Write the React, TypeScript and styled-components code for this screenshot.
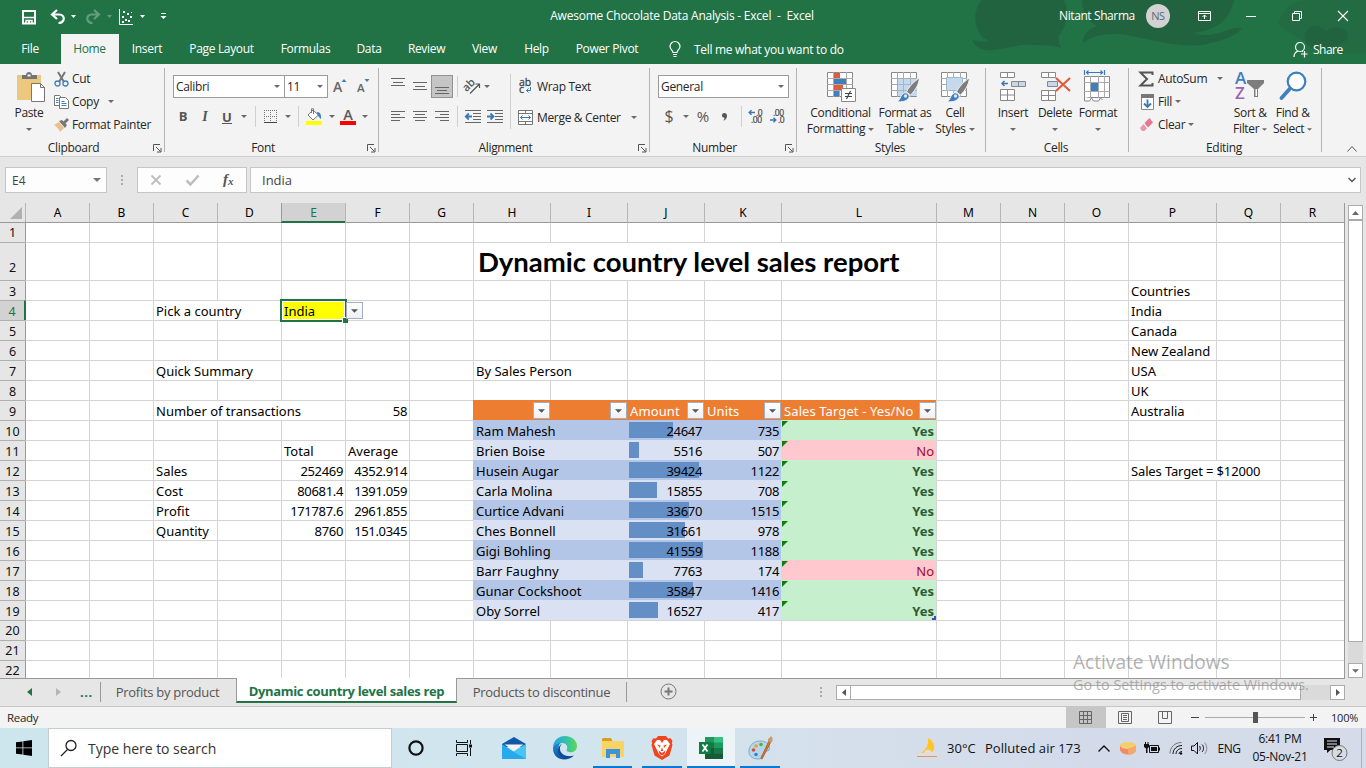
import React from "react";
import styled, { createGlobalStyle, css } from "styled-components";

const green = "#217346";
const uiFont = `"Open Sans", "Noto Sans", sans-serif`;
const cellFont = `"Noto Sans", "Open Sans", sans-serif`;

const GlobalStyle = createGlobalStyle`
  *, *::before, *::after { box-sizing: border-box; }
  body { margin: 0; background: #e6e6e6; overflow: hidden; }
  svg { display: block; flex: none; overflow: visible; }
`;

const Window = styled.div`
  position: relative;
  width: 1366px;
  height: 768px;
  display: flex;
  flex-direction: column;
  overflow: hidden;
  font-family: ${uiFont};
  font-size: 12px;
  letter-spacing: -0.33px;
  color: #262626;
  white-space: nowrap;
`;

/* ---------- Title bar and tabs ---------- */

const Banner = styled.header`
  position: relative;
  height: 64px;
  background: ${green};
  color: #fff;
  display: flex;
  flex-direction: column;
`;

const BannerArt = styled.svg`
  position: absolute;
  right: 0;
  top: 0;
`;

const TitleBar = styled.div`
  position: relative;
  height: 34px;
  display: grid;
  grid-template-columns: 500px 364px 1fr;
  align-items: center;
`;

const QuickAccess = styled.div`
  display: flex;
  align-items: center;
  padding-left: 21px;
`;

const WindowTitle = styled.div`
  text-align: center;
  letter-spacing: -0.22px;
  white-space: pre;
  padding-bottom: 3px;
`;

const Account = styled.div`
  display: flex;
  align-items: center;
  padding: 0 0 3px 195px;
`;

const UserName = styled.span`
  width: 87px;
  letter-spacing: -0.4px;
`;

const Avatar = styled.span`
  width: 24px;
  height: 24px;
  border-radius: 50%;
  background: #d2d2d2;
  color: #5c6a76;
  font-size: 11px;
  line-height: 24px;
  text-align: center;
  margin-right: 28px;
`;

const TabRow = styled.nav`
  position: relative;
  display: flex;
  height: 30px;
  line-height: 29px;
`;

const Tab = styled.a<{ $w: number; $active?: boolean }>`
  width: ${(p) => p.$w}px;
  padding-right: 1px;
  text-align: center;
  ${(p) => p.$active && css`background: #f3f3f3; color: ${green};`}
`;

const TellMe = styled.div`
  display: flex;
  align-items: center;
  gap: 13px;
  margin-left: 17px;
  width: 624px;
  letter-spacing: -0.3px;
`;

const Share = styled.div`
  display: flex;
  align-items: center;
  gap: 4px;
  letter-spacing: -0.5px;
`;

/* ---------- Ribbon ---------- */

const Ribbon = styled.section`
  display: flex;
  height: 93px;
  background: #f3f3f3;
  border-bottom: 1px solid #cfcfcf;
  padding-top: 4px;
`;

const Group = styled.div<{ $w: number }>`
  width: ${(p) => p.$w}px;
  height: 84px;
  border-right: 1px solid #b4b4b4;
  display: flex;
  flex-direction: column;
`;

const GroupBody = styled.div<{ $pad?: number }>`
  height: 71px;
  flex: none;
  display: flex;
  padding-left: ${(p) => p.$pad ?? 0}px;
`;

const GroupFooter = styled.div`
  position: relative;
  height: 13px;
  line-height: 18px;
  text-align: center;
  padding-right: 17px;
`;

const PlainFooter = styled(GroupFooter)`
  padding-right: 2px;
`;

const Launcher = styled.svg`
  position: absolute;
  right: 2px;
  top: 5px;
`;

const Stack = styled.div`
  display: flex;
  flex-direction: column;
`;

const CommandStack = styled(Stack)`
  margin-top: -1px;
`;

const CommandRow = styled.div<{ $gap?: number }>`
  height: 23px;
  display: flex;
  align-items: center;
  line-height: 20px;
  gap: ${(p) => p.$gap ?? 3}px;
`;

const ToolRow = styled.div<{ $top: number; $h?: number }>`
  display: flex;
  align-items: center;
  height: ${(p) => p.$h ?? 23}px;
  margin-top: ${(p) => p.$top}px;
`;

const Slot = styled.div<{ $w: number; $on?: boolean }>`
  width: ${(p) => p.$w}px;
  height: 23px;
  display: flex;
  align-items: center;
  justify-content: center;
  flex: none;
  ${(p) => p.$on && css`background: #c5c5c5; border: 1px solid #929292;`}
`;

const Divider = styled.span<{ $h?: number }>`
  width: 1px;
  height: ${(p) => p.$h ?? 21}px;
  background: #d0d0d0;
  flex: none;
`;

const Field = styled.div<{ $w: number }>`
  width: ${(p) => p.$w}px;
  height: 23px;
  border: 1px solid #9b9b9b;
  background: #fff;
  display: flex;
  align-items: center;
  justify-content: space-between;
  padding: 0 4px 0 2px;
  & + & { margin-left: -1px; }
`;

const Glyph = styled.span<{ $size?: number; $bold?: boolean; $italic?: boolean; $under?: boolean }>`
  font-size: ${(p) => p.$size ?? 13}px;
  line-height: 15px;
  font-weight: ${(p) => (p.$bold ? 700 : 400)};
  font-style: ${(p) => (p.$italic ? "italic" : "normal")};
  color: #555;
  letter-spacing: 0;
  ${(p) => p.$under && css`border-bottom: 1px solid #555; height: 14px; line-height: 14px;`}
`;

const SerifGlyph = styled(Glyph)`
  font-family: "Liberation Serif", serif;
  font-weight: 700;
`;

const BigButton = styled.div<{ $w: number }>`
  width: ${(p) => p.$w}px;
  display: flex;
  flex-direction: column;
  align-items: center;
  padding-top: 3px;
  flex: none;
`;

const PasteButton = styled(BigButton)`
  padding-left: 4px;
`;

const BigIcon = styled.div`
  height: 34px;
`;

const BigLabel = styled.div`
  height: 16px;
  line-height: 16px;
  display: flex;
  align-items: center;
  gap: 3px;
`;

const Collapse = styled.div`
  flex: 1;
  display: flex;
  align-items: flex-end;
  justify-content: flex-end;
  padding: 0 9px 4px 0;
`;

/* ---------- Formula bar ---------- */

const FormulaBar = styled.section`
  display: flex;
  height: 46px;
  padding: 10px 5px 0 5px;
  background: #e6e6e6;
  font-size: 13px;
  letter-spacing: 0;
  color: #444;
`;

const FormulaBox = styled.div<{ $w: number }>`
  width: ${(p) => p.$w}px;
  height: 26px;
  border: 1px solid #c6c6c6;
  background: #fdfdfd;
  display: flex;
  align-items: center;
`;

const NameBox = styled(FormulaBox)`
  justify-content: space-between;
  padding: 0 5px 0 6px;
  font-size: 12px;
`;

const FormulaInput = styled(FormulaBox)`
  margin-left: 3px;
  justify-content: space-between;
  padding: 0 4px 0 11px;
`;

const Dots = styled.div<{ $w: number }>`
  width: ${(p) => p.$w}px;
  display: flex;
  flex-direction: column;
  align-items: center;
  gap: 2px;
  height: 26px;
  justify-content: center;
`;

const Dot = styled.i`
  width: 2px;
  height: 2px;
  background: #ababab;
`;

/* ---------- Sheet ---------- */

const SheetArea = styled.main`
  display: flex;
  height: 475px;
  background: #e6e6e6;
`;

const Sheet = styled.div`
  width: 1345px;
  border-right: 1px solid #999;
  overflow: hidden;
  font-family: ${cellFont};
  font-size: 13px;
  letter-spacing: 0;
  color: #000;
`;

const gridColumns = "25px repeat(7, 64px) repeat(4, 77px) 155px repeat(3, 64px) 88px repeat(2, 64px)";

const ColumnHeads = styled.div`
  display: grid;
  grid-template-columns: ${gridColumns};
  height: 19px;
  background: #e6e6e6;
`;

const ColumnHead = styled.div<{ $active?: boolean }>`
  font-size: 12px;
  line-height: 19px;
  text-align: center;
  border-left: 1px solid #b5b5b5;
  ${(p) =>
    p.$active &&
    css`
      position: relative;
      z-index: 1;
      background: #d2d2d2;
      color: ${green};
      border-left-color: #999;
      box-shadow: inset 0 -1px 0 ${green}, 0 1px 0 ${green};
    `}
`;

const Corner = styled.div`
  display: flex;
  align-items: flex-end;
  justify-content: flex-end;
  padding: 0 3px 3px 0;
`;

const SheetRow = styled.div<{ $h: number; $first?: boolean }>`
  display: grid;
  grid-template-columns: ${gridColumns};
  height: ${(p) => p.$h}px;
  background: #fff;
  ${(p) => p.$first && css`& > * { border-top-color: #999 !important; }`}
`;

const RowHead = styled.div<{ $active?: boolean; $tall?: boolean }>`
  display: flex;
  align-items: flex-end;
  justify-content: center;
  background: ${(p) => (p.$active ? "#d2d2d2" : "#e6e6e6")};
  color: ${(p) => (p.$active ? green : "#111")};
  border-top: 1px solid #b0b0b0;
  font-size: 12.5px;
  line-height: 18px;
  padding-bottom: ${(p) => (p.$tall ? 3 : 0)}px;
  ${(p) => p.$active && css`border-right: 1px solid ${green};`}
`;

type Tone = "header" | "dark" | "light" | "yes" | "no" | "plain";

const tones: Record<Tone, string> = {
  plain: "transparent",
  header: "#ed7d31",
  dark: "#b4c6e7",
  light: "#d9e1f2",
  yes: "#c6efce",
  no: "#ffc7ce",
};

const Cell = styled.div<{ $span: number; $tone: Tone; $right?: boolean; $edge?: string }>`
  position: relative;
  grid-column: span ${(p) => p.$span};
  min-width: 0;
  border-top: 1px solid #d4d4d4;
  border-left: 1px solid ${(p) => p.$edge ?? "#d4d4d4"};
  padding: 0 2px;
  line-height: 20px;
  text-align: ${(p) => (p.$right ? "right" : "left")};
  letter-spacing: ${(p) => (p.$right ? "-0.34px" : "0")};
  background: ${(p) => tones[p.$tone]};
  ${(p) => p.$tone !== "plain" && css`border-color: transparent;`}
  ${(p) => p.$tone === "header" && css`
    display: flex;
    justify-content: space-between;
    color: #fff;
    padding-right: 0;
    letter-spacing: 0.1px;
  `}
  ${(p) => p.$tone === "yes" && css`color: #2f5b33; font-weight: 700; letter-spacing: 0; box-shadow: 1px 0 0 #c6efce;`}
  ${(p) => p.$tone === "no" && css`color: #9c0a2c; letter-spacing: 0; box-shadow: 1px 0 0 #ffc7ce;`}
`;

const TargetNote = styled.span`
  letter-spacing: -0.14px;
`;

const TitleText = styled.div`
  font: 700 27.5px/36px Lato, "Open Sans", sans-serif;
  padding-left: 2px;
  margin-top: 1px;
`;

const DropButton = styled.span`
  width: 17px;
  height: 17px;
  margin-top: 1px;
  border: 1px solid #a3afc0;
  background: linear-gradient(#fff, #eef0f4);
  display: flex;
  align-items: center;
  justify-content: center;
  flex: none;
`;

const CellDrop = styled(DropButton)`
  position: absolute;
  left: 64px;
  top: 1px;
  margin: 0;
  z-index: 2;
`;

const Selection = styled.div`
  position: absolute;
  left: -2px;
  top: -2px;
  width: 67px;
  height: 23px;
  border: 2px solid ${green};
  background: #ff0;
  box-shadow: inset 0 0 0 1px #fff;
  padding-left: 2px;
  line-height: 20px;
  z-index: 1;
  &::after {
    content: "";
    position: absolute;
    right: -3px;
    bottom: -3px;
    width: 6px;
    height: 6px;
    background: ${green};
    border: 1px solid #fff;
    border-right: 0;
    border-bottom: 0;
  }
`;

const DataBar = styled.i`
  position: absolute;
  left: 1px;
  top: 1px;
  height: 16px;
  background: #638ec6;
`;

const BarValue = styled.span`
  position: relative;
`;

const ErrorMark = styled.i`
  position: absolute;
  left: 0;
  top: 0;
  border-top: 6px solid #0a800a;
  border-right: 6px solid transparent;
`;

const TableCorner = styled.i`
  position: absolute;
  right: 0;
  bottom: 1px;
  width: 4px;
  height: 4px;
  border-right: 2px solid #3f51b5;
  border-bottom: 2px solid #3f51b5;
`;

const VScroll = styled.div`
  width: 15px;
  margin: 2px 0 0 3px;
  display: flex;
  flex-direction: column;
  height: 473px;
  background: #dadada;
`;

const ScrollButton = styled.div`
  width: 15px;
  height: 15px;
  border: 1px solid #ababab;
  background: #fff;
  display: flex;
  align-items: center;
  justify-content: center;
  flex: none;
`;

const VThumb = styled.div`
  height: 422px;
  margin-bottom: auto;
  border: 1px solid #ababab;
  background: #fff;
`;

/* ---------- Sheet tabs and status bar ---------- */

const SheetTabs = styled.footer`
  display: flex;
  height: 28px;
  background: #e6e6e6;
  font-size: 13px;
  letter-spacing: -0.3px;
  color: #555;
  line-height: 26px;
`;

const TabsLine = styled.div<{ $w: number }>`
  width: ${(p) => p.$w}px;
  border-top: 1px solid #999;
  padding-bottom: 2px;
  display: flex;
  align-items: center;
`;

const TabNav = styled.div`
  display: flex;
  align-items: center;
  width: 100px;
  padding-left: 27px;
`;

const Ellipsis = styled.b`
  color: ${green};
  letter-spacing: 0.6px;
  margin-left: 19px;
`;

const SheetTab = styled.div<{ $w: number }>`
  width: ${(p) => p.$w}px;
  text-align: center;
  letter-spacing: -0.27px;
  line-height: 24px;
`;

const ActiveSheetTab = styled(SheetTab)`
  background: #fff;
  color: ${green};
  font-weight: 700;
  letter-spacing: -0.34px;
  height: 25px;
  border-left: 1px solid #999;
  border-right: 1px solid #999;
  border-bottom: 2px solid ${green};
  line-height: 26px;
`;

const TabSeparator = styled.i`
  width: 1px;
  height: 20px;
  background: #999;
`;

const HScroll = styled.div`
  display: flex;
  width: 509px;
  height: 15px;
  background: #dadada;
  justify-content: flex-start;
  margin-top: 2px;
`;

const HThumb = styled.div`
  width: 451px;
  margin: 0 auto 0 -1px;
  border: 1px solid #ababab;
  background: #fff;
`;

const StatusBar = styled.div`
  display: flex;
  height: 22px;
  background: #f3f3f3;
  border-top: 1px solid #c6c6c6;
  align-items: center;
  font-size: 11.5px;
`;

const ReadyText = styled.div`
  width: 1066px;
  padding-left: 7px;
`;

const ViewButton = styled.div<{ $on?: boolean }>`
  width: 40px;
  height: 21px;
  display: flex;
  align-items: center;
  justify-content: center;
  padding: 0 2px 1px 0;
  background: ${(p) => (p.$on ? "#c6c6c6" : "transparent")};
`;

const ZoomControl = styled.div`
  display: flex;
  align-items: center;
  margin-left: 5px;
  width: 140px;
`;

const Percent = styled.span`
  font-size: 11px;
  letter-spacing: -0.2px;
`;

/* ---------- Taskbar ---------- */

const Taskbar = styled.footer`
  display: flex;
  height: 40px;
  background: linear-gradient(90deg, #cde6ee 0%, #d2e5ee 45%, #d5dfeb 62%, #d3dbea 80%, #d5dbe9 100%);
  color: #111;
  font-size: 13px;
  letter-spacing: 0;
  & > * { flex: none; }
`;

const StartButton = styled.div`
  width: 48px;
  display: flex;
  align-items: center;
  justify-content: center;
`;

const SearchBox = styled.div`
  width: 344px;
  background: #fff;
  border: 1px solid #c4ccd0;
  display: flex;
  align-items: center;
  padding-left: 11px;
  gap: 10px;
  font-size: 14px;
  letter-spacing: -0.03px;
  color: #333;
`;

const TaskItem = styled.div<{ $w?: number; $open?: boolean; $active?: boolean }>`
  width: ${(p) => p.$w ?? 49}px;
  display: flex;
  align-items: center;
  justify-content: center;
  position: relative;
  ${(p) =>
    p.$open &&
    css`
      &::after {
        content: "";
        position: absolute;
        bottom: 0;
        left: ${p.$active ? 0 : 5}px;
        right: ${p.$active ? 0 : 5}px;
        height: 2px;
        background: #0a78d4;
      }
    `}
  ${(p) => p.$active && css`background: #ecf4f8;`}
`;

const Tray = styled.div`
  display: flex;
  align-items: center;
  margin-left: 131px;
  width: 450px;
`;

const Weather = styled.div`
  display: flex;
  align-items: center;
  gap: 9px;
  width: 178px;
  letter-spacing: 0.06px;
`;

const Clock = styled.div`
  width: 60px;
  text-align: center;
  font-size: 12px;
  line-height: 18px;
  letter-spacing: -0.25px;
`;

const TrayText = styled.span`
  font-size: 12px;
  letter-spacing: -0.4px;
  width: 42px;
  text-align: center;
`;

const TrayIcon = styled.div<{ $w: number }>`
  width: ${(p) => p.$w}px;
  display: flex;
  justify-content: center;
`;

const PeekEdge = styled.i`
  width: 1px;
  height: 40px;
  background: #a9b3bd;
`;

const Watermark = styled.div`
  position: absolute;
  left: 1073px;
  top: 650px;
  font-size: 19.1px;
  line-height: 24px;
  letter-spacing: 0;
  color: rgba(140, 140, 140, 0.68);
`;

const WatermarkHint = styled.div`
  font-size: 14.4px;
  line-height: 22px;
  letter-spacing: 0;
`;

/* ---------- Icons ---------- */

const Caret = ({ color = "#6a6a6a", w = 6 }: { color?: string; w?: number }) => (
  <svg width={w} height={Math.ceil(w / 2)} viewBox="0 0 6 3"><path d="M0 0h6L3 3z" fill={color} /></svg>
);

const LauncherIcon = () => (
  <Launcher width="9" height="9" viewBox="0 0 9 9" fill="none" stroke="#555">
    <path d="M.5 7V.5H7M3 3l4.5 4.5M8 4v4H4" />
  </Launcher>
);

const Lines = ({ kind }: { kind: "top" | "mid" | "bottom" | "left" | "center" | "right" }) => {
  const paths = {
    top: "M0 -.5h14M2 3.5h10M0 6.5h14",
    mid: "M0 3.5h14M2 7.5h10M0 10.5h14",
    bottom: "M0 8.5h14M2 11.5h10M0 14.5h14",
    left: "M0 2.5h14M0 5.5h9M0 8.5h14M0 11.5h9",
    center: "M0 2.5h14M2 5.5h10M0 8.5h14M2 11.5h10",
    right: "M0 2.5h14M5 5.5h9M0 8.5h14M5 11.5h9",
  };
  return <svg width="14" height="16" viewBox="0 0 14 16"><path d={paths[kind]} stroke="#666" /></svg>;
};

const Indent = ({ right }: { right?: boolean }) => (
  <svg width="16" height="14" viewBox="0 0 16 14">
    <path d="M0 .5h16M8 3.5h8M8 6.5h8M8 9.5h8M0 12.5h16" stroke="#666" />
    {right ? <path d="M0 6.5h6M3.5 3.5l3 3-3 3" stroke="#3a78b5" strokeWidth="1.8" fill="none" /> : <path d="M1 6.5h6M3.8 3.5l-3 3 3 3" stroke="#3a78b5" strokeWidth="1.8" fill="none" />}
  </svg>
);

const GridIcon = ({ children }: { children?: React.ReactNode }) => (
  <svg width="30" height="32" viewBox="0 0 30 32">
    <path d="M1.5 1.5h25v24h-25z" fill="#fff" stroke="#888" />
    <path d="M1 7.500h26M1 13.500h26M1 19.500h26M7.5 1v25M13.5 1v25M20.5 1v25" stroke="#aaa" />
    {children}
  </svg>
);

const Brush = () => (
  <g>
    <path d="M29.5 7c-5 3-11 9-13 14l4 3c4-4 8-9 9-17z" fill="#7d7d7d" stroke="#f3f3f3" />
    <path d="M7 30.500c3-1 3-5 6-8 3-2 7 1 6 4-2 4-8 5-12 4z" fill="#3f7fbd" stroke="#f3f3f3" />
    <circle cx="15.500" cy="25" r="1.700" fill="#dbe8f4" />
  </g>
);

const BorderIcon = () => (
  <svg width="13" height="14" viewBox="0 0 13 14">
    <path d="M.5 0v12M12.5 0v12M6.5 0v12M0 .5h13M0 6.5h13" stroke="#777" strokeDasharray="1 1" />
    <path d="M0 12.5h13" stroke="#444" />
  </svg>
);

const FillIcon = () => (
  <svg width="16" height="17" viewBox="0 0 16 17">
    <path d="M2 7l5-5 5.5 5-5.5 5z" fill="#fff" stroke="#777" />
    <path d="M5.5 5V.8h2V6" fill="none" stroke="#777" />
    <path d="M11 4c3 0 4.5 2.5 4 7-1.500-.6-2.200-3-3.500-4z" fill="#3f7fbd" />
    <path d="M0 13h16v4H0z" fill="#ff0" />
  </svg>
);

const Letter = styled.text`
  font-family: "Open Sans", sans-serif;
  letter-spacing: 0;
`;

const FontColorIcon = () => (
  <svg width="16" height="17" viewBox="0 0 16 17">
    <Letter x="8" y="11.500" fontSize="14.500" fontWeight="600" textAnchor="middle" fill="#5a5a5a">A</Letter>
    <path d="M0 13h16v4H0z" fill="#f00" />
  </svg>
);

const FontSizeIcon = ({ up }: { up?: boolean }) => (
  <svg width="14" height="17" viewBox="0 0 14 17">
    <Letter x={up ? 0 : 1} y="14" fontSize={up ? 14 : 11.5} fontWeight="600" fill="#666">A</Letter>
    <path d={up ? "M8.500 4h5L11 1z" : "M8.500 1h5L11 4z"} fill="#3f7fbd" />
  </svg>
);

const DecimalIcon = ({ more }: { more?: boolean }) => (
  <svg width="15" height="15" viewBox="0 0 15 15">
    <Letter x={more ? 8 : 3} y="6.500" fontSize="8.500" fill="#444" stroke="#444" strokeWidth=".2" textLength={more ? 6.5 : 11}>{more ? ".0" : ".00"}</Letter>
    <Letter x={more ? 3 : 8} y="14" fontSize="8.500" fill="#444" stroke="#444" strokeWidth=".2" textLength={more ? 11 : 6.5}>{more ? ".00" : ".0"}</Letter>
    {more ? <path d="M7 3.500H1.500M3.500 1.200L1.200 3.500l2.300 2.300" stroke="#3a78b5" strokeWidth="1.400" fill="none" /> : <path d="M0 11h5.500M3.500 8.700L5.800 11l-2.300 2.300" stroke="#3a78b5" strokeWidth="1.400" fill="none" />}
  </svg>
);

/* ---------- Sheet data ---------- */

const columns = "ABCDEFGHIJKLMNOPQR".split("");

interface CellDef {
  text: React.ReactNode;
  span?: number;
  right?: boolean;
  tone?: Tone;
}

const sales: [string, number, number][] = [
  ["Ram Mahesh", 24647, 735],
  ["Brien Boise", 5516, 507],
  ["Husein Augar", 39424, 1122],
  ["Carla Molina", 15855, 708],
  ["Curtice Advani", 33670, 1515],
  ["Ches Bonnell", 31661, 978],
  ["Gigi Bohling", 41559, 1188],
  ["Barr Faughny", 7763, 174],
  ["Gunar Cockshoot", 35847, 1416],
  ["Oby Sorrel", 16527, 417],
];

const maxAmount = 41559;
const cells: Record<string, CellDef> = {};
const put = (ref: string, text: React.ReactNode, extra: Partial<CellDef> = {}) => {
  cells[ref] = { text, ...extra };
};

put("H2", <TitleText>Dynamic country level sales report</TitleText>, { span: 5 });
put("C4", "Pick a country", { span: 2 });
put("E4", (
  <>
    <Selection>India</Selection>
    <CellDrop><Caret w={7} color="#555" /></CellDrop>
  </>
));
put("C7", "Quick Summary", { span: 2 });
put("H7", "By Sales Person", { span: 2 });
put("C9", "Number of transactions", { span: 3 });
put("F9", "58", { right: true });
put("E11", "Total");
put("F11", "Average");
[
  ["Sales", "252469", "4352.914"],
  ["Cost", "80681.4", "1391.059"],
  ["Profit", "171787.6", "2961.855"],
  ["Quantity", "8760", "151.0345"],
].forEach(([name, total, average], i) => {
  put(`C${12 + i}`, name);
  put(`E${12 + i}`, total, { right: true });
  put(`F${12 + i}`, average, { right: true });
});
["Countries", "India", "Canada", "New Zealand", "USA", "UK", "Australia"].forEach((name, i) => put(`P${3 + i}`, name));
put("P12", <TargetNote>Sales Target = $12000</TargetNote>, { span: 2 });
[["H", ""], ["I", ""], ["J", "Amount"], ["K", "Units"], ["L", "Sales Target - Yes/No"]].forEach(([col, label]) =>
  put(`${col}9`, <><span>{label}</span><DropButton><Caret w={7} color="#555" /></DropButton></>, { tone: "header" })
);
sales.forEach(([name, amount, units], i) => {
  const row = 10 + i;
  const tone: Tone = i % 2 ? "light" : "dark";
  const hit = amount > 12000;
  put(`H${row}`, name, { span: 2, tone });
  put(`J${row}`, (
    <>
      <DataBar style={{ width: Math.round((amount / maxAmount) * 74) }} />
      <BarValue>{amount}</BarValue>
    </>
  ), { tone, right: true });
  put(`K${row}`, units, { tone, right: true });
  put(`L${row}`, (
    <>
      <ErrorMark />
      {hit ? "Yes" : "No"}
      {i === sales.length - 1 && <TableCorner />}
    </>
  ), { tone: hit ? "yes" : "no", right: true });
});

const GridRow = ({ row }: { row: number }) => {
  const items: React.ReactNode[] = [];
  for (let c = 0; c < columns.length; ) {
    const def = cells[columns[c] + row];
    const span = def?.span ?? 1;
    items.push(
      <Cell key={c} $span={span} $tone={def?.tone ?? "plain"} $right={def?.right} $edge={c === 0 ? (row === 4 ? green : "#999") : undefined}>
        {def?.text}
      </Cell>
    );
    c += span;
  }
  return (
    <SheetRow $h={row === 2 ? 38 : 20} $first={row === 1}>
      <RowHead $active={row === 4} $tall={row === 2}>{row}</RowHead>
      {items}
    </SheetRow>
  );
};

/* ---------- Page sections ---------- */

const TopBanner = () => (
  <Banner>
    <BannerArt width="406" height="64" viewBox="0 0 406 64">
      <path d="M22 0C14 8 13 24 20 34c3 4 6 6 9 7-7 1-12 1-17-2 2 8 10 12 22 11 12-1 24-6 40-5 10 0 18 0 27 3-2-4-3-8-2-13C109 24 108 8 104 0z" fill="#22633f" />
      <path d="M122 0c0 14 6 21 15 26-8 3-14 8-14 17 12-9 28-11 48-7 28 5 56 14 80 7 18-4 28-10 31-15-10-1-16 4-28 6-8 2-14 1-20-1 24-3 36-14 40-33z" fill="#22633f" />
      <path d="M318 24c4-16 14-24 30-24h58v53c-30 3-62-6-88-29z" fill="#236c43" />
      <path d="M345 40c-3-12 12-20 21-9 6-6 22-4 22 5 0 8-22 14-28 15-7-1-14-5-15-11z" fill="#22633f" />
    </BannerArt>
    <TitleBar>
      <QuickAccess>
        <svg width="130" height="20" viewBox="0 0 130 20" fill="none" stroke="#fff">
          <path d="M2 4h12v12.500H2z" strokeWidth="2" /><path d="M3 10.500h10" strokeWidth="1.500" /><path d="M5 17v-3.500h6V17" strokeWidth="1.500" /><path d="M7 14h2v3H7z" fill="#fff" stroke="none" />
          <path d="M36 3l-5 4.500 5 4.500M31.500 7.500H38c4 0 5.500 3 4.500 5.500-.8 2-2.500 3-5 3" strokeWidth="2.200" />
          <path d="M50 8h5L52.500 11z" fill="#fff" stroke="none" />
          <g opacity=".3"><path d="M73 3l5 4.500-5 4.500M77.500 7.500H71c-4 0-5.500 3-4.500 5.500.8 2 2.500 3 5 3" strokeWidth="2.200" /><path d="M86 8h5L88.500 11z" fill="#fff" stroke="none" /></g>
          <path d="M98.500 2v15.500H112" />
          <path d="M102 4h2v2h-2zM106 6h2v2h-2zM101 9h2v2h-2zM109 9h2v2h-2zM104 12h2v2h-2zM101 14h2v2h-2zM107 13h2v2h-2zM110 5h1v1h-1z" fill="#fff" stroke="none" />
          <path d="M119 8h5l-2.500 3z" fill="#fff" stroke="none" />
        </svg>
        <svg width="18" height="20" viewBox="0 0 18 20" fill="#fff"><path d="M10 6h5v1h-5zM9.500 9h6l-3 3z" /></svg>
      </QuickAccess>
      <WindowTitle>Awesome Chocolate Data Analysis - Excel  -  Excel</WindowTitle>
      <Account>
        <UserName>Nitant Sharma</UserName>
        <Avatar>NS</Avatar>
        <svg width="152" height="14" viewBox="0 0 152 14" fill="none" stroke="#fff">
          <path d="M.5 2.500h12v9H.5zM.5 4.500h12M6.500 10V6M4.500 8l2-2 2 2" />
          <path d="M48 7.500h10" />
          <path d="M94.500 4.500h7v7h-7zM96.500 4V2.500h7v7H102" />
          <path d="M140 2l10 10M150 2l-10 10" strokeWidth="1.100" />
        </svg>
      </Account>
    </TitleBar>
    <TabRow>
      <Tab $w={61}>File</Tab>
      <Tab $w={58} $active>Home</Tab>
      <Tab $w={57}>Insert</Tab>
      <Tab $w={92}>Page Layout</Tab>
      <Tab $w={76}>Formulas</Tab>
      <Tab $w={51}>Data</Tab>
      <Tab $w={64}>Review</Tab>
      <Tab $w={52}>View</Tab>
      <Tab $w={52}>Help</Tab>
      <Tab $w={89}>Power Pivot</Tab>
      <TellMe>
        <svg width="12" height="17" viewBox="0 0 12 17" fill="none" stroke="#fff" strokeWidth="1.200">
          <path d="M4 11.500C4 9 1 8.500 1 5.500a5 5 0 0 1 10 0c0 3-3 3.500-3 6zM4 13.500h4M4.500 15.500h3" />
        </svg>
        Tell me what you want to do
      </TellMe>
      <Share>
        <svg width="16" height="17" viewBox="0 0 16 17" fill="none" stroke="#fff" strokeWidth="1.200">
          <circle cx="7" cy="6" r="4.500" /><path d="M1 16c0-3 1.500-5 4-6M9 10l1 .8M8 13h6.500M11.500 10v6.500" />
        </svg>
        Share
      </Share>
    </TabRow>
  </Banner>
);

const RibbonSection = () => (
  <Ribbon>
    <Group $w={165}>
      <GroupBody>
        <PasteButton $w={54}>
          <BigIcon>
            <svg width="32" height="32" viewBox="0 0 32 32">
              <path d="M4 4h24v25H4z" fill="#ecc77e" /><path d="M9 8V4h4c0-4 6-4 6 0h5v4z" fill="#737373" /><path d="M14.500 3.500h3v2h-3z" fill="#fff" />
              <path d="M18.500 12.500h9l4 4v14h-13z" fill="#fff" stroke="#777" /><path d="M27.500 12.500v4h4" fill="none" stroke="#777" />
            </svg>
          </BigIcon>
          <BigLabel>Paste</BigLabel>
          <BigLabel><Caret /></BigLabel>
        </PasteButton>
        <CommandStack>
          <CommandRow>
            <svg width="15" height="16" viewBox="0 0 15 16" fill="none">
              <path d="M4 1l6 10M11 1L5 11" stroke="#777" strokeWidth="2" /><circle cx="3.500" cy="12.500" r="2.500" stroke="#3f7fbd" strokeWidth="1.300" /><circle cx="11.500" cy="12.500" r="2.500" stroke="#3f7fbd" strokeWidth="1.300" />
            </svg>
            Cut
          </CommandRow>
          <CommandRow>
            <svg width="15" height="15" viewBox="0 0 15 15">
              <path d="M.5 1.500h5l2 2v8h-7z" fill="#fff" stroke="#777" /><path d="M5.500 3.500h6l3 3v8h-9z" fill="#fff" stroke="#777" /><path d="M2 4.500h2.500M2 6.500h2.500M2 8.500h2.500M7.500 7.500h3M7.500 9.500h5M7.500 11.500h5" stroke="#3f7fbd" />
            </svg>
            <span>Copy&nbsp;&nbsp;</span>
            <Slot $w={8}><Caret /></Slot>
          </CommandRow>
          <CommandRow>
            <svg width="15" height="15" viewBox="0 0 15 15">
              <path d="M0 8l5-3 5 6-4 4c-1-3-3-5-6-7z" fill="#ecc08a" /><path d="M5 4l3-1 5 5-2 3z" fill="#777" /><path d="M9 5l4-4 2 2-4 4z" fill="#777" />
            </svg>
            Format Painter
          </CommandRow>
        </CommandStack>
      </GroupBody>
      <GroupFooter>Clipboard<LauncherIcon /></GroupFooter>
    </Group>

    <Group $w={214}>
      <GroupBody $pad={8}>
        <Stack>
          <ToolRow $top={7}>
            <Field $w={112}>Calibri<Caret /></Field>
            <Field $w={44}>11<Caret /></Field>
            <Slot $w={24}><FontSizeIcon up /></Slot>
            <Slot $w={21}><FontSizeIcon /></Slot>
          </ToolRow>
          <ToolRow $top={7}>
            <Slot $w={20}><Glyph $bold>B</Glyph></Slot>
            <Slot $w={24}><SerifGlyph $italic $size={14}>I</SerifGlyph></Slot>
            <Slot $w={20}><Glyph $bold $under>U</Glyph></Slot>
            <Slot $w={14}><Caret /></Slot>
            <Slot $w={4} />
            <Divider />
            <Slot $w={28}><BorderIcon /></Slot>
            <Slot $w={7}><Caret /></Slot>
            <Slot $w={7} />
            <Divider />
            <Slot $w={30}><FillIcon /></Slot>
            <Slot $w={5}><Caret /></Slot>
            <Slot $w={28}><FontColorIcon /></Slot>
            <Slot $w={6}><Caret /></Slot>
          </ToolRow>
        </Stack>
      </GroupBody>
      <GroupFooter>Font<LauncherIcon /></GroupFooter>
    </Group>

    <Group $w={271}>
      <GroupBody $pad={8}>
        <Stack>
          <ToolRow $top={7}>
            <Slot $w={22}><Lines kind="top" /></Slot>
            <Slot $w={22}><Lines kind="mid" /></Slot>
            <Slot $w={22} $on><Lines kind="bottom" /></Slot>
            <Slot $w={4} />
            <Divider />
            <Slot $w={26}>
              <svg width="17" height="17" viewBox="0 0 17 17">
                <g transform="rotate(-45 7 8)"><Letter x="0" y="10" fontSize="11" fontWeight="600" fill="#555">ab</Letter></g>
                <path d="M7 15.500l9-9M16.500 10V6h-4" fill="none" stroke="#555" strokeWidth="1.200" />
              </svg>
            </Slot>
            <Caret />
          </ToolRow>
          <ToolRow $top={7}>
            <Slot $w={22}><Lines kind="left" /></Slot>
            <Slot $w={22}><Lines kind="center" /></Slot>
            <Slot $w={22}><Lines kind="right" /></Slot>
            <Slot $w={4} />
            <Divider />
            <Slot $w={30}><Indent /></Slot>
            <Slot $w={14}><Indent right /></Slot>
            <Slot $w={8} />
          </ToolRow>
        </Stack>
        <ToolRow $top={6} $h={55}><Divider $h={55} /></ToolRow>
        <Stack>
          <ToolRow $top={7}>
            <Slot $w={4} />
            <Slot $w={22}>
              <svg width="14" height="17" viewBox="0 0 14 17">
                <Letter x="0" y="7.500" fontSize="10.500" fill="#444" stroke="#444" strokeWidth=".3">ab</Letter>
                <Letter x="0" y="15" fontSize="10.500" fill="#444" stroke="#444" strokeWidth=".3">c</Letter>
                <path d="M11.500 9v3.500H7.500M9.500 10.500l-2 2 2 2" fill="none" stroke="#3a78b5" />
              </svg>
            </Slot>
            Wrap Text
          </ToolRow>
          <ToolRow $top={8}>
            <Slot $w={3} />
            <Slot $w={23}>
              <svg width="15" height="15" viewBox="0 0 15 15" fill="none" stroke="#777">
                <path d="M.5.5h14v14H.5z" fill="#fff" /><path d="M.5 3.500h14M.5 11.500h14M7.500 0v3.500M7.500 11.500V15" /><path d="M2.500 7.500h10M4.500 5.500l-2 2 2 2M10.500 5.500l2 2-2 2" stroke="#3a78b5" />
              </svg>
            </Slot>
            Merge &amp; Center
            <Slot $w={26}><Caret /></Slot>
          </ToolRow>
        </Stack>
      </GroupBody>
      <GroupFooter>Alignment<LauncherIcon /></GroupFooter>
    </Group>

    <Group $w={147}>
      <GroupBody $pad={8}>
        <Stack>
          <ToolRow $top={7}><Field $w={131}>General<Caret /></Field></ToolRow>
          <ToolRow $top={7}>
            <Slot $w={22}><Glyph $size={16}>$</Glyph></Slot>
            <Slot $w={11}><Caret /></Slot>
            <Slot $w={24}><Glyph $size={15}>%</Glyph></Slot>
            <Slot $w={19}>
              <svg width="5" height="8" viewBox="0 0 5 8"><path d="M2.200 0C4 0 5 1.200 5 3c0 2.200-1.500 4-4 5 1-1.200 1.500-2.200 1.500-3.300C1 4.700 0 3.700 0 2.400 0 1 .9 0 2.200 0z" fill="#555" /></svg>
            </Slot>
            <Slot $w={7} />
            <Divider />
            <Slot $w={26}><DecimalIcon more /></Slot>
            <Slot $w={18}><DecimalIcon /></Slot>
          </ToolRow>
        </Stack>
      </GroupBody>
      <GroupFooter>Number<LauncherIcon /></GroupFooter>
    </Group>

    <Group $w={189}>
      <GroupBody $pad={7}>
        <BigButton $w={73}>
          <BigIcon>
            <GridIcon>
              <path d="M8 2h6v5H8zM8 14h9v5H8z" fill="#dd5c3e" /><path d="M8 8h12v5H8zM8 20h5v5H8z" fill="#3f7fbd" />
              <path d="M15.500 17.500h14v13h-14z" fill="#fff" stroke="#888" /><path d="M19 22.500h7M19 25.500h7M24.500 20l-4 8" stroke="#444" strokeWidth="1.200" />
            </GridIcon>
          </BigIcon>
          <BigLabel>Conditional</BigLabel>
          <BigLabel>Formatting<Caret /></BigLabel>
        </BigButton>
        <BigButton $w={56}>
          <BigIcon><GridIcon><path d="M8 8h19v17H8z" fill="#c5d8ec" /><path d="M8 13.500h19M8 19.500h19M13.500 8v17M20.500 8v17" stroke="#9fb8d2" /><Brush /></GridIcon></BigIcon>
          <BigLabel>Format as</BigLabel>
          <BigLabel>Table<Caret /></BigLabel>
        </BigButton>
        <BigButton $w={44}>
          <BigIcon><GridIcon><path d="M6.500 6.500h16v13h-16z" fill="#c5d8ec" stroke="#9fb8d2" /><Brush /></GridIcon></BigIcon>
          <BigLabel>Cell</BigLabel>
          <BigLabel>Styles<Caret /></BigLabel>
        </BigButton>
      </GroupBody>
      <PlainFooter>Styles</PlainFooter>
    </Group>

    <Group $w={143}>
      <GroupBody $pad={6}>
        <BigButton $w={42}>
          <BigIcon>
            <svg width="26" height="32" viewBox="0 0 26 32" fill="#fff" stroke="#888">
              <path d="M.5 1.500h14v5H.5zM7.500 1.500v5M.5 18.500h14v11H.5zM7.500 18.500v11M.5 24h14" /><path d="M11.500 10.500h14v5h-14z" fill="#c5d8ec" /><path d="M18.500 10.500v5" /><path d="M8 12.500H2M4.500 10L2 12.500 4.500 15" fill="none" stroke="#3a78b5" strokeWidth="1.500" />
            </svg>
          </BigIcon>
          <BigLabel>Insert</BigLabel>
          <BigLabel><Caret /></BigLabel>
        </BigButton>
        <BigButton $w={42}>
          <BigIcon>
            <svg width="28" height="32" viewBox="0 0 28 32" fill="#fff" stroke="#888">
              <path d="M.5 1.500h14v5H.5zM7.500 1.500v5M.5 19.500h14v10H.5zM7.500 19.500v10M.5 24.500h14" /><path d="M6.500 10.500h10v5h-10z" fill="#c5d8ec" /><path d="M15 7l14 13M29 7L15 20" fill="none" stroke="#dd5c3e" strokeWidth="2.200" />
            </svg>
          </BigIcon>
          <BigLabel>Delete</BigLabel>
          <BigLabel><Caret /></BigLabel>
        </BigButton>
        <BigButton $w={44}>
          <BigIcon>
            <svg width="29" height="32" viewBox="0 0 29 32" fill="none" stroke="#888">
              <path d="M.5 5.500h25v21H.5z" fill="#fff" /><path d="M0 11.500h26M0 20.500h26M6.500 5v22M14.500 5v22M20.500 5v22" stroke="#aaa" /><path d="M7 12h7v8H7z" fill="#3f7fbd" stroke="none" /><path d="M.5 26v4h5l2-3 2 3h5l2-3 2 2" fill="#fff" /><path d="M.5 -1v5M20.500 -1v5M2 1.500h17M4.500 -.5l-2 2 2 2M16.500 -.5l2 2-2 2" stroke="#3a78b5" strokeWidth="1.200" />
            </svg>
          </BigIcon>
          <BigLabel>Format</BigLabel>
          <BigLabel><Caret /></BigLabel>
        </BigButton>
      </GroupBody>
      <PlainFooter>Cells</PlainFooter>
    </Group>

    <Group $w={193}>
      <GroupBody $pad={10}>
        <CommandStack>
          <CommandRow>
            <svg width="16" height="16" viewBox="0 0 16 16" fill="none" stroke="#555" strokeWidth="2"><path d="M13.500 4V1.500H1.500L8 8l-6.500 6.500h12V12" /></svg>
            AutoSum
            <Slot $w={20}><Caret /></Slot>
          </CommandRow>
          <CommandRow>
            <svg width="16" height="16" viewBox="0 0 16 16"><path d="M2.500.5h12v15h-12z" fill="#fff" stroke="#888" /><path d="M2 0h13v4H2z" fill="#777" /><path d="M8.500 5.500v7M5 9.500l3.500 3.500L12 9.500" fill="none" stroke="#3a78b5" strokeWidth="1.800" /></svg>
            Fill<Caret />
          </CommandRow>
          <CommandRow>
            <svg width="16" height="16" viewBox="0 0 16 16"><path d="M5.500 6L10.500 1l3.500 4.500L9 10.500z" fill="#e8788f" /><path d="M4.500 7l3.500 4.500-2.500 2.500H3L1 11z" fill="#e79aa9" /></svg>
            Clear<Caret />
          </CommandRow>
        </CommandStack>
        <BigButton $w={40}>
          <BigIcon>
            <svg width="30" height="32" viewBox="0 0 30 32">
              <Letter x="0" y="13" fontSize="17" fontWeight="600" fill="#3f7fbd">A</Letter><Letter x="0" y="28" fontSize="17" fontWeight="600" fill="#9a62b8">Z</Letter>
              <path d="M12 9h17v3l-6 6v8h-4v-8l-7-6z" fill="#7d7d7d" /><path d="M20.500 18h1.500v7h-1.500z" fill="#fff" />
            </svg>
          </BigIcon>
          <BigLabel>Sort &amp;</BigLabel>
          <BigLabel>Filter<Caret w={5} /></BigLabel>
        </BigButton>
        <BigButton $w={45}>
          <BigIcon>
            <svg width="28" height="32" viewBox="0 0 28 32" fill="none" stroke="#3f7fbd"><circle cx="17.500" cy="10.500" r="8.800" strokeWidth="2.200" fill="#fff" /><path d="M11 17.500L2.500 27" strokeWidth="3.800" strokeLinecap="round" /></svg>
          </BigIcon>
          <BigLabel>Find &amp;</BigLabel>
          <BigLabel>Select<Caret w={5} /></BigLabel>
        </BigButton>
      </GroupBody>
      <PlainFooter>Editing</PlainFooter>
    </Group>
    <Collapse>
      <svg width="10" height="6" viewBox="0 0 10 6" fill="none" stroke="#555"><path d="M.5 5.500l4.500-5 4.500 5" /></svg>
    </Collapse>
  </Ribbon>
);

const FormulaSection = () => (
  <FormulaBar>
    <NameBox $w={102}>E4<Caret w={8} color="#777" /></NameBox>
    <Dots $w={30}><Dot /><Dot /><Dot /></Dots>
    <FormulaBox $w={110}>
      <svg width="106" height="24" viewBox="0 0 106 24" fill="none">
        <path d="M13.500 7.500l9 9M22.500 7.500l-9 9" stroke="#bdbdbd" strokeWidth="1.800" />
        <path d="M48.500 12.500l4 4 8-9" stroke="#bdbdbd" strokeWidth="2.500" />
        <text x="85" y="16" fontFamily="Liberation Serif, serif" fontStyle="italic" fontWeight="700" fontSize="15" fill="#555" letterSpacing="0">f</text>
        <text x="90" y="16.500" fontFamily="Liberation Serif, serif" fontStyle="italic" fontWeight="700" fontSize="11" fill="#555" letterSpacing="0">x</text>
      </svg>
    </FormulaBox>
    <FormulaInput $w={1111}>
      India
      <svg width="8" height="6" viewBox="0 0 8 6" fill="none" stroke="#555" strokeWidth="1.500"><path d="M.5 1L4 4.500 7.500 1" /></svg>
    </FormulaInput>
  </FormulaBar>
);

const rowNumbers = Array.from({ length: 22 }, (_, i) => i + 1);

const SheetSection = () => (
  <SheetArea>
    <Sheet>
      <ColumnHeads>
        <Corner><svg width="12" height="12" viewBox="0 0 12 12"><path d="M12 0v12H0z" fill="#b1b1b1" /></svg></Corner>
        {columns.map((c) => <ColumnHead key={c} $active={c === "E"}>{c}</ColumnHead>)}
      </ColumnHeads>
      {rowNumbers.map((row) => <GridRow key={row} row={row} />)}
    </Sheet>
    <VScroll>
      <ScrollButton><svg width="7" height="4" viewBox="0 0 7 4"><path d="M0 4h7L3.500 0z" fill="#666" /></svg></ScrollButton>
      <VThumb />
      <ScrollButton><Caret w={7} /></ScrollButton>
    </VScroll>
  </SheetArea>
);

const SheetTabsSection = () => (
  <SheetTabs>
    <TabsLine $w={236}>
      <TabNav>
        <svg width="5" height="8" viewBox="0 0 5 8"><path d="M5 0v8L0 4z" fill={green} /></svg>
        <Slot $w={24} />
        <svg width="5" height="8" viewBox="0 0 5 8"><path d="M0 0v8l5-4z" fill="#b5b5b5" /></svg>
        <Ellipsis>...</Ellipsis>
      </TabNav>
      <TabSeparator />
      <SheetTab $w={133}>Profits by product</SheetTab>
    </TabsLine>
    <ActiveSheetTab $w={221}>Dynamic country level sales rep</ActiveSheetTab>
    <TabsLine $w={888}>
      <SheetTab $w={169}>Products to discontinue</SheetTab>
      <TabSeparator />
      <Slot $w={82}>
        <svg width="17" height="17" viewBox="0 0 17 17" fill="none" stroke="#777"><circle cx="8.500" cy="8.500" r="7.500" /><path d="M4.500 8.500h8M8.500 4.500v8" strokeWidth="2" /></svg>
      </Slot>
      <Slot $w={96} />
      <Dots $w={31}><Dot /><Dot /><Dot /></Dots>
      <HScroll>
        <ScrollButton><svg width="4" height="7" viewBox="0 0 4 7"><path d="M4 0v7L0 3.500z" fill="#555" /></svg></ScrollButton>
        <HThumb />
        <ScrollButton><svg width="4" height="7" viewBox="0 0 4 7"><path d="M0 0v7l4-3.500z" fill="#555" /></svg></ScrollButton>
      </HScroll>
    </TabsLine>
  </SheetTabs>
);

const StatusSection = () => (
  <StatusBar>
    <ReadyText>Ready</ReadyText>
    <ViewButton $on><svg width="13" height="13" viewBox="0 0 13 13" fill="none" stroke="#666"><path d="M.5.5h12v12H.5zM0 4.500h13M0 8.500h13M4.500 0v13M8.500 0v13" /></svg></ViewButton>
    <ViewButton><svg width="14" height="13" viewBox="0 0 14 13" fill="none" stroke="#666"><path d="M.5.5h13v12H.5zM3.500 2.500h7v8h-7zM5 4.500h4M5 6.500h4M5 8.500h4" /></svg></ViewButton>
    <ViewButton><svg width="14" height="13" viewBox="0 0 14 13" fill="none" stroke="#666"><path d="M.5.5h13v12H.5zM4.500 0v7.500h5V0" /></svg></ViewButton>
    <ZoomControl>
      <svg width="128" height="11" viewBox="0 0 128 11" fill="none"><path d="M0 5.500h8M119 5.500h7M122.500 2v7" stroke="#444" /><path d="M14 5.500h100" stroke="#ababab" /><path d="M62 0h5v11h-5z" fill="#555" /></svg>
    </ZoomControl>
    <Percent>100%</Percent>
  </StatusBar>
);

const TaskbarSection = () => (
  <Taskbar>
    <StartButton><svg width="16" height="16" viewBox="0 0 16 16"><path d="M0 2.300l6.500-.9v6.100H0zM7.300 1.300L16 0v7.500H7.300zM0 8.300h6.500v6.300L0 13.700zM7.300 8.300H16V16l-8.700-1.300z" /></svg></StartButton>
    <SearchBox>
      <svg width="18" height="18" viewBox="0 0 18 18" fill="none" stroke="#222" strokeWidth="1.300"><circle cx="11" cy="6.500" r="5" /><path d="M7.500 10.500L1 17" /></svg>
      Type here to search
    </SearchBox>
    <TaskItem $w={48}><svg width="16" height="16" viewBox="0 0 16 16"><circle cx="8" cy="8" r="6.600" fill="none" stroke="#111" strokeWidth="2.200" /></svg></TaskItem>
    <TaskItem $w={47}><svg width="16" height="16" viewBox="0 0 16 16" fill="none" stroke="#111"><path d="M.5 0v2.500h11V0M.5 4.500h11v7H.5zM.5 16v-2.500h11V16M14.500 0v4M14.500 8v8" /><path d="M13 4.500h3v3h-3z" fill="#111" stroke="none" /></svg></TaskItem>
    <TaskItem $w={54}>
      <svg width="24" height="22" viewBox="0 0 24 22"><path d="M0 7l12-7 12 7v3H0z" fill="#1059a9" /><path d="M0 7l12 8L24 7v15H0z" fill="#27a9ee" /><path d="M24 7v15L11 14.500z" fill="#48c4f5" /><path d="M2.500 7.500h19L12 14z" fill="#f4f4f4" /></svg>
    </TaskItem>
    <TaskItem $w={47}>
      <svg width="24" height="24" viewBox="0 0 24 24">
        <defs>
          <linearGradient id="edgeTop"><stop offset="0" stopColor="#2aa5e0" /><stop offset=".6" stopColor="#35c4a5" /><stop offset="1" stopColor="#62d84f" /></linearGradient>
          <linearGradient id="edgeBody" x2="0" y2="1"><stop offset="0" stopColor="#1c90d8" /><stop offset="1" stopColor="#0d4fa0" /></linearGradient>
        </defs>
        <path d="M0 12C0 4 6 0 12 0s12 4 12 10c0 5-4 7-8 6-2-.5-3-1-2-3 1-3-1-6-5-6-5 0-8 2-9 5z" fill="url(#edgeTop)" />
        <path d="M0 12c1-4 5-5.500 8-5-2 1-3 4-2 7 1 5 7 8 14 6-4 5-20 6-20-8z" fill="url(#edgeBody)" />
        <path d="M9 8c-5 4-1 15 12 11.500-6 5.500-16 2-16-5C5 11 7 8.500 9 8z" fill="#0b4a94" />
      </svg>
    </TaskItem>
    <TaskItem $w={49} $open>
      <svg width="22" height="20" viewBox="0 0 22 20"><path d="M0 2c0-1 .5-2 1-2h8l1.500 3H0z" fill="#d9a019" /><path d="M0 3h22v16H0z" fill="#fbd364" /><path d="M4 20v-9h14v9h-4v-4H8v4z" fill="#3b93d9" /></svg>
    </TaskItem>
    <TaskItem $w={50} $open>
      <svg width="22" height="24" viewBox="0 0 22 24">
        <path d="M5 2.500L7 0h8l2 2.500 2.500-.2L21.500 5l-.7 2 .7 2-3 10.500L11 24l-7.500-4.500L.5 9l.7-2-.7-2 2-2.700z" fill="#f0451f" />
        <path d="M6 4h10l3 4-3.500 7-1.500 3-3 2.500L8 18l-1.500-3L3 8z" fill="#fff" />
        <path d="M6 8.500l3.500 1L9 12zM16 8.500l-3.500 1L13 12zM9 4l2 3 2-3zM11 11l1.200 4H9.800zM7.500 14.500L11 17l3.500-2.500L13.500 18 11 19.500 8.500 18z" fill="#f0451f" />
      </svg>
    </TaskItem>
    <TaskItem $w={48} $open $active>
      <svg width="24" height="22" viewBox="0 0 24 22">
        <path d="M6 0h18v22H6z" fill="#1d9a5e" /><path d="M15 0h9v5.500h-9z" fill="#35c185" /><path d="M6 5.500h9V11H6z" fill="#107c41" /><path d="M15 11h9v5.500h-9z" fill="#17784a" /><path d="M6 11h9v5.500H6zM6 16.500h18V22H6z" fill="#185c37" />
        <path d="M0 5h12v12H0z" fill="#107c41" /><path d="M3.500 7.500l5 7M8.500 7.500l-5 7" stroke="#fff" strokeWidth="1.800" />
      </svg>
    </TaskItem>
    <TaskItem $w={50} $open>
      <svg width="25" height="24" viewBox="0 0 25 24">
        <path d="M12 5c7 0 11 4 9 9-1 2-4 0-5 2-1 3 0 7-6 7C4 23 0 19 1 14c1-6 6-9 11-9z" fill="#b5d7ea" stroke="#7baecb" />
        <circle cx="5.500" cy="14" r="1.800" fill="#dd4c3a" /><circle cx="8" cy="10" r="1.800" fill="#e7a42d" /><circle cx="13" cy="8.500" r="1.800" fill="#62a846" /><circle cx="8" cy="18.500" r="1.800" fill="#3b7fc9" />
        <path d="M21 5l1.800 1L14 23l-1.200-.8z" fill="#d07b2d" stroke="#b5632a" /><path d="M20 5c-.5-3 2-3 3-5l1.500 2C25 4 24 6 23 7z" fill="#c99a6d" />
      </svg>
    </TaskItem>
    <Tray>
      <Weather>
        <svg width="22" height="20" viewBox="0 0 22 20"><path d="M12 0c8 4 8 13 2 16H1c7-1 12-7 11-16z" fill="#fdc628" /><path d="M2 18c0-4 4-4 6-3 2-5 7-4 8 0 3-2 5 1 5 3z" fill="#e5dcd8" /><path d="M1 18.500h20" stroke="#d59a6f" /></svg>
        <span>30°C</span>
        <span>Polluted air 173</span>
      </Weather>
      <TrayIcon $w={20}><svg width="12" height="7" viewBox="0 0 12 7" fill="none" stroke="#111" strokeWidth="1.400"><path d="M.5 6.500L6 1l5.500 5.500" /></svg></TrayIcon>
      <TrayIcon $w={28}><svg width="16" height="13" viewBox="0 0 16 13"><path d="M0 3v5c2 6 14 6 16 0V3z" fill="#f08a6a" /><ellipse cx="8" cy="3.500" rx="8" ry="3.500" fill="#f5cf6a" /><path d="M8 6.500l8-2.500v5c-2 3-5 4-8 4z" fill="#f4a86b" /></svg></TrayIcon>
      <TrayIcon $w={20}><svg width="16" height="12" viewBox="0 0 16 12"><path d="M5.500 3.500h9v7h-9z" fill="none" stroke="#111" /><path d="M7 5h6v4H7zM14.500 5.500H16v3h-1.500zM0 2h5v3L3.500 6.500V11H2V6.500L0 5zM1 0h1v2H1zM3.500 0h1v2h-1z" fill="#111" /></svg></TrayIcon>
      <TrayIcon $w={28}><svg width="14" height="14" viewBox="0 0 14 14" fill="none" stroke="#111"><path d="M1 12.500C1 6 6 1.500 12.500 1.500" stroke="#777" /><path d="M4 13c0-5 4-8.500 9-8.500M7 13c0-3 2.500-5.500 6-5.500M10 13c0-1.500 1.300-2.500 3-2.500" /><circle cx="12" cy="12.500" r="1.200" fill="#111" stroke="none" /></svg></TrayIcon>
      <TrayIcon $w={18}><svg width="17" height="14" viewBox="0 0 17 14" fill="none" stroke="#111"><path d="M.5 5v4.500H3L6.500 13V1.500L3 5zM8.500 5c1 1 1 3.500 0 4.500M11 3.500c2 2 2 5.500 0 7.500" /><path d="M13.500 1.500c3 3 3 8.500 0 11.500" stroke="#888" /></svg></TrayIcon>
      <TrayText>ENG</TrayText>
      <Clock><div>6:41 PM</div><div>05-Nov-21</div></Clock>
      <TrayIcon $w={51}>
        <svg width="25" height="26" viewBox="0 0 25 26">
          <path d="M1 3h16v12H7.500L4 18v-3H1z" fill="#111" /><path d="M4 6h10M4 9h10M4 12h7" stroke="#dfe4ee" />
          <circle cx="16.500" cy="18" r="7.500" fill="#d7dbe3" stroke="#777" /><Letter x="16.500" y="22" fontSize="11.500" textAnchor="middle" fill="#111">2</Letter>
        </svg>
      </TrayIcon>
      <PeekEdge />
    </Tray>
  </Taskbar>
);

export default function App() {
  return (
    <Window>
      <GlobalStyle />
      <TopBanner />
      <RibbonSection />
      <FormulaSection />
      <SheetSection />
      <SheetTabsSection />
      <StatusSection />
      <TaskbarSection />
      <Watermark>
        Activate Windows
        <WatermarkHint>Go to Settings to activate Windows.</WatermarkHint>
      </Watermark>
    </Window>
  );
}
